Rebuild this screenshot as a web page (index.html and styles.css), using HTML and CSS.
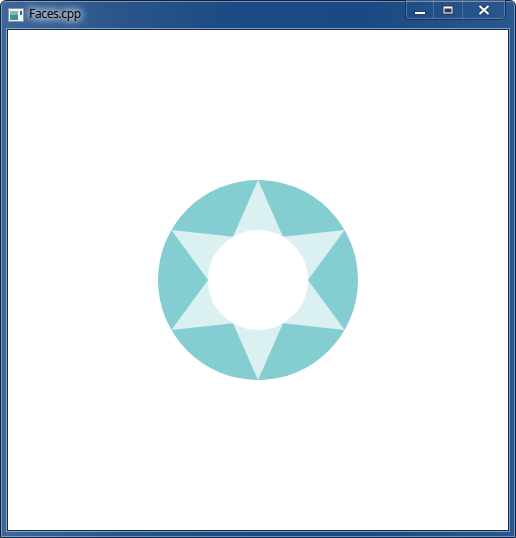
FILE: index.html
```html
<!DOCTYPE html>
<html>
<head>
<meta charset="utf-8">
<title>Faces.cpp</title>
<link rel="stylesheet" href="styles.css">
</head>
<body>
<div class="window">
  <div class="titlebar">
    <svg class="app-icon" width="16" height="14" viewBox="0 0 16 14">
      <rect x="0.5" y="0.5" width="15" height="13" fill="#f4f6f8" stroke="#8a97a6"/>
      <rect x="2" y="3" width="8" height="9" fill="#3f8f8a"/>
      <rect x="2" y="3" width="8" height="4" fill="#7fb8c4"/>
      <rect x="12" y="3" width="2" height="4" fill="#2a5fa8"/>
    </svg>
    <span class="title">Faces.cpp</span>
    <div class="buttons">
      <div class="btn btn-min">
        <svg width="14" height="6" viewBox="0 0 14 6"><rect x="1.5" y="1.5" width="11" height="3" fill="#fff" stroke="#2a3b55"/></svg>
      </div>
      <div class="btn btn-max">
        <svg width="12" height="10" viewBox="0 0 12 10"><rect x="0.5" y="0.5" width="11" height="9" fill="#2a3b55"/><rect x="1.5" y="1.5" width="9" height="7" fill="#fff"/><rect x="2.5" y="3.5" width="7" height="4" fill="#2a3b55"/></svg>
      </div>
      <div class="btn btn-close">
        <svg width="12" height="10" viewBox="0 0 12 10"><path d="M1.5 1 L10.5 9 M10.5 1 L1.5 9" stroke="#2a3b55" stroke-width="3.6" fill="none"/><path d="M1.5 1 L10.5 9 M10.5 1 L1.5 9" stroke="#fff" stroke-width="2" fill="none"/></svg>
      </div>
    </div>
  </div>
  <div class="client">
    <svg class="canvas" width="500" height="500" viewBox="0 0 500 500">
      <circle cx="250" cy="250" r="100" fill="#84cdd1"/>
      <polygon fill="#dbf0f1" points="250,150 275,206.7 336.6,200 300,250 336.6,300 275,293.3 250,350 225,293.3 163.4,300 200,250 163.4,200 225,206.7"/>
      <circle cx="250" cy="250" r="50" fill="#ffffff"/>
    </svg>
  </div>
</div>
</body>
</html>
```
FILE: styles.css
```css
html, body {
  margin: 0;
  padding: 0;
  background: #ffffff;
}
.window {
  box-sizing: border-box;
  width: 516px;
  height: 538px;
  border: 1px solid #0f223f;
  border-radius: 6px 6px 0 0;
  background: linear-gradient(90deg, #3e6798 0%, #2a5689 22%, #1c4a84 45%, #1a4983 70%, #2a578d 100%);
  box-shadow: inset 0 0 0 1px rgba(180, 200, 225, 0.55);
  padding: 0 6px 6px 6px;
  display: flex;
  flex-direction: column;
  position: relative;
  font-family: "Noto Sans", "Open Sans", sans-serif;
}
.titlebar {
  height: 28px;
  flex: none;
  display: flex;
  align-items: flex-start;
  position: relative;
}
.app-icon {
  margin-top: 7px;
  margin-left: 1px;
  flex: none;
}
.title {
  margin-left: 5px;
  margin-top: 5px;
  font-size: 12px;
  letter-spacing: -0.35px;
  line-height: 16px;
  color: #000;
  text-shadow: 0 0 6px #fff, 0 0 9px rgba(255,255,255,0.9), 0 0 12px rgba(255,255,255,0.8);
}
.buttons {
  position: absolute;
  top: -1px;
  right: 3px;
  height: 19px;
  display: flex;
  border: 1px solid rgba(10, 25, 50, 0.55);
  border-top: none;
  border-radius: 0 0 5px 5px;
  box-shadow: inset 0 0 0 1px rgba(170, 195, 225, 0.35);
  overflow: hidden;
}
.btn {
  display: flex;
  align-items: center;
  justify-content: center;
  height: 19px;
  border-left: 1px solid rgba(150, 175, 210, 0.35);
}
.btn:first-child { border-left: none; }
.btn-min { width: 27px; }
.btn-min svg { margin-top: 6px; }
.btn-max { width: 28px; }
.btn-close { width: 42px; }
.client {
  flex: 1;
  background: #ffffff;
  border: 1px solid #13294a;
  box-shadow: 0 0 0 1px rgba(190, 210, 235, 0.6);
  display: flex;
  align-items: center;
  justify-content: center;
}
.canvas {
  display: block;
}
```
